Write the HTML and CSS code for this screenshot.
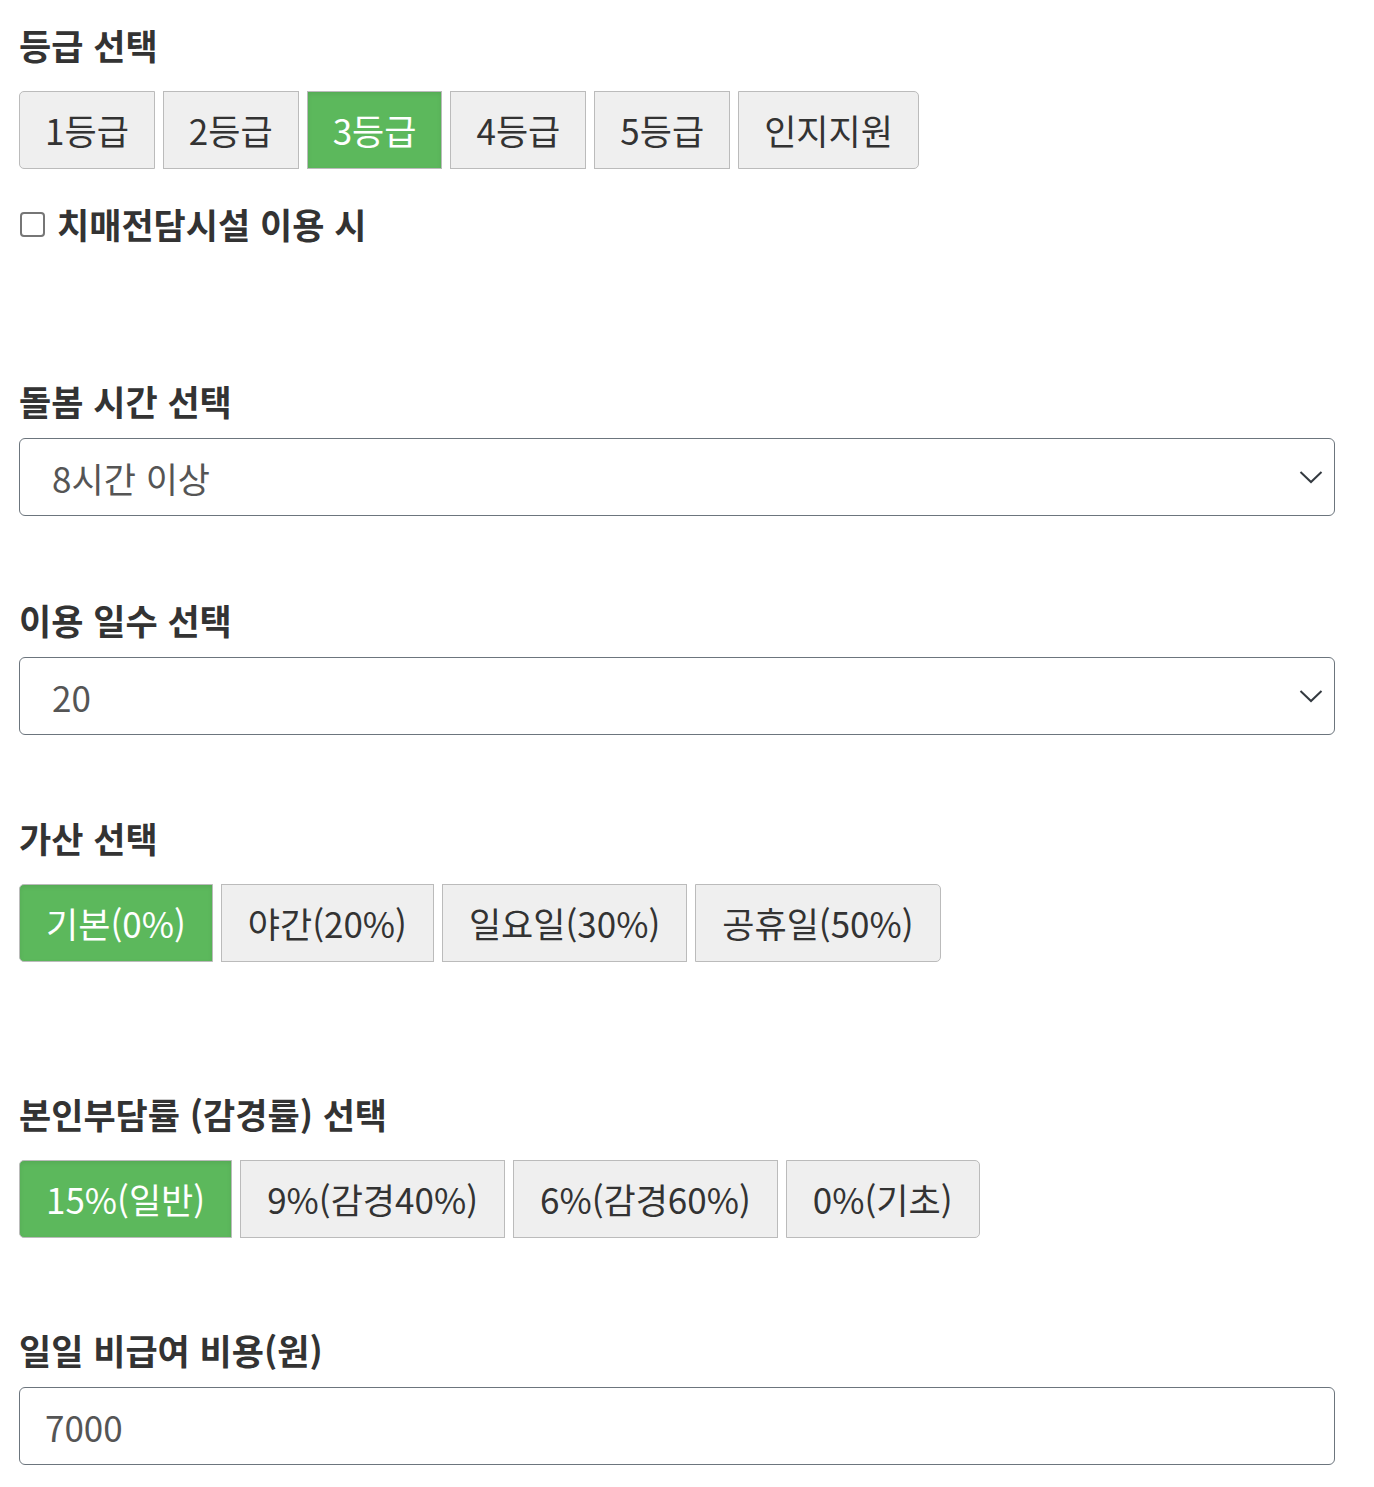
FILE: index.html
```html
<!DOCTYPE html>
<html lang="ko">
<head>
<meta charset="utf-8">
<title>계산기</title>
<link rel="stylesheet" href="styles.css">
</head>
<body>
<div class="page">
  <section class="sec sec-grade">
    <h2 class="title">등급 선택</h2>
    <div class="btn-group">
      <button class="btn">1등급</button>
      <button class="btn">2등급</button>
      <button class="btn active">3등급</button>
      <button class="btn">4등급</button>
      <button class="btn">5등급</button>
      <button class="btn">인지지원</button>
    </div>
    <label class="check-row"><input type="checkbox" class="check"><span>치매전담시설 이용 시</span></label>
  </section>

  <section class="sec sec-time">
    <h2 class="title">돌봄 시간 선택</h2>
    <div class="select-wrap">
      <select class="select"><option>8시간 이상</option></select>
      <svg class="chev" width="24" height="14" viewBox="0 0 24 14"><path d="M1.5 2 L12 12 L22.5 2" fill="none" stroke="#343a40" stroke-width="2"/></svg>
    </div>
  </section>

  <section class="sec sec-days">
    <h2 class="title">이용 일수 선택</h2>
    <div class="select-wrap">
      <select class="select"><option>20</option></select>
      <svg class="chev" width="24" height="14" viewBox="0 0 24 14"><path d="M1.5 2 L12 12 L22.5 2" fill="none" stroke="#343a40" stroke-width="2"/></svg>
    </div>
  </section>

  <section class="sec sec-add">
    <h2 class="title">가산 선택</h2>
    <div class="btn-group wide">
      <button class="btn active">기본(0%)</button>
      <button class="btn">야간(20%)</button>
      <button class="btn">일요일(30%)</button>
      <button class="btn">공휴일(50%)</button>
    </div>
  </section>

  <section class="sec sec-rate">
    <h2 class="title">본인부담률 (감경률) 선택</h2>
    <div class="btn-group wide">
      <button class="btn active">15%(일반)</button>
      <button class="btn">9%(감경40%)</button>
      <button class="btn">6%(감경60%)</button>
      <button class="btn">0%(기초)</button>
    </div>
  </section>

  <section class="sec sec-cost">
    <h2 class="title">일일 비급여 비용(원)</h2>
    <input class="input" type="text" value="7000">
  </section>
</div>
</body>
</html>
```
FILE: styles.css
```css
html, body {
  margin: 0;
  padding: 0;
  background: #fff;
}
body {
  font-family: "Noto Sans CJK KR", "Noto Sans", sans-serif;
  color: #333;
}
.page {
  width: 1316px;
  margin-left: 19px;
  padding-top: 21px;
}
.sec {
  display: flex;
  flex-direction: column;
}
.title {
  margin: 0;
  font-size: 35px;
  line-height: 48px;
  font-weight: 700;
  color: #333;
}
.btn-group {
  display: flex;
  gap: 8px;
  margin-top: 22px;
}
.btn {
  font-family: "Noto Sans CJK KR", "Noto Sans", sans-serif;
  font-size: 35px;
  height: 78px;
  line-height: 74px;
  padding: 0 25px;
  margin: 0;
  background: #efefef;
  border: 1px solid #bbb;
  color: #333;
  border-radius: 0;
  box-sizing: border-box;
  cursor: pointer;
}
.btn-group.wide .btn {
  padding: 0 26px;
}
.btn:first-child {
  border-radius: 5px 0 0 5px;
}
.btn:last-child {
  border-radius: 0 5px 5px 0;
}
.btn.active {
  background: #5cb85c;
  color: #fff;
  box-shadow: inset 0 2px 4px rgba(0, 0, 0, 0.08);
}
.check-row {
  display: flex;
  align-items: center;
  gap: 12px;
  margin-top: 31px;
  font-size: 35px;
  line-height: 48px;
  font-weight: 700;
  color: #333;
}
.check {
  width: 25px;
  height: 25px;
  margin: 0 0 0 1px;
  appearance: none;
  -webkit-appearance: none;
  border: 2px solid #767676;
  border-radius: 4px;
  background: #fff;
  box-sizing: border-box;
}
.sec-time { margin-top: 129px; }
.sec-days { margin-top: 80px; }
.sec-add { margin-top: 79px; }
.sec-rate { margin-top: 128px; }
.sec-cost { margin-top: 88px; }
.select-wrap {
  position: relative;
  margin-top: 13px;
}
.select {
  width: 100%;
  height: 78px;
  box-sizing: border-box;
  appearance: none;
  -webkit-appearance: none;
  background: #fff;
  border: 1px solid #6c757d;
  border-radius: 6px;
  padding: 0 60px 0 32px;
  font-family: "Noto Sans CJK KR", "Noto Sans", sans-serif;
  font-size: 35px;
  color: #555;
  margin: 0;
}
.chev {
  position: absolute;
  right: 12px;
  top: 32px;
  pointer-events: none;
}
.input {
  margin-top: 13px;
  width: 100%;
  height: 78px;
  box-sizing: border-box;
  border: 1px solid #6c757d;
  border-radius: 6px;
  padding: 0 25px;
  font-family: "Noto Sans CJK KR", "Noto Sans", sans-serif;
  font-size: 35px;
  color: #555;
  background: #fff;
}
```
